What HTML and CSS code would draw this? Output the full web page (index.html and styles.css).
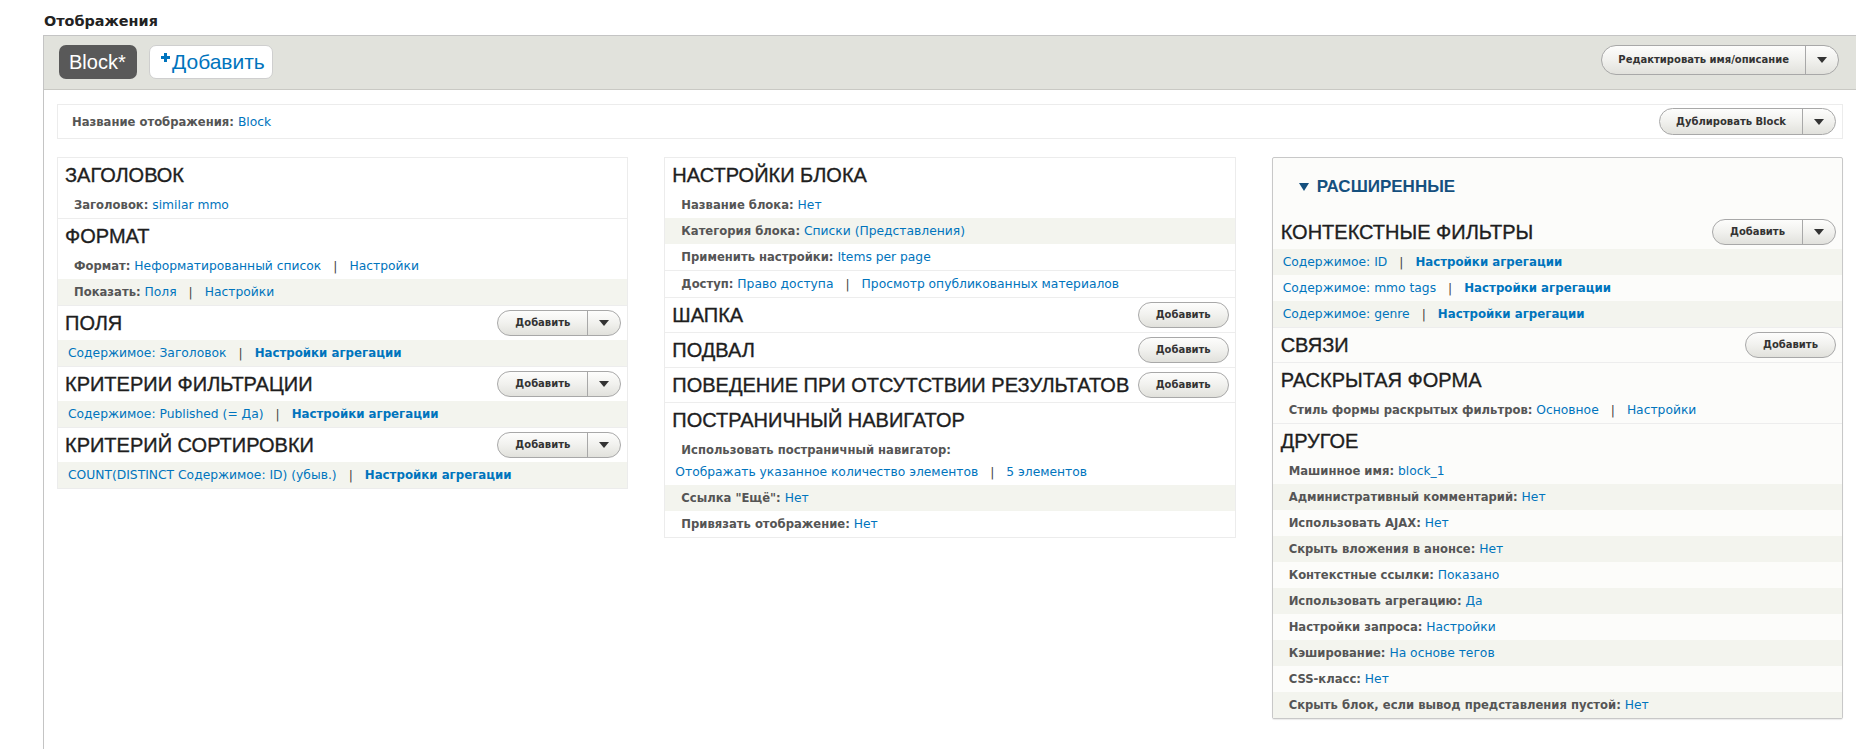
FILE: index.html
```html
<!DOCTYPE html>
<html lang="ru">
<head>
<meta charset="utf-8">
<title>Отображения</title>
<link rel="stylesheet" href="styles.css">
</head>
<body>
<div class="page">
  <h1 class="page-title">Отображения</h1>
  <div class="display">
    <div class="topbar">
      <div class="tabs">
        <span class="tab tab-active">Block*</span>
        <a class="tab tab-add"><svg class="plus" width="9" height="9" viewBox="0 0 9 9"><path d="M3 0h3v3h3v3H6v3H3V6H0V3h3z" fill="#0074bd"/></svg>Добавить</a>
      </div>
      <div class="dropbutton db-top">
        <span class="db-main">Редактировать имя/описание</span>
        <span class="db-arrow"><i class="tri"></i></span>
      </div>
    </div>
    <div class="display-body">
      <div class="namebar">
        <div class="namebar-text"><span class="lbl lbl-flush">Название отображения:</span> <a class="lnk">Block</a></div>
        <div class="dropbutton db-dup">
          <span class="db-main">Дублировать Block</span>
          <span class="db-arrow"><i class="tri"></i></span>
        </div>
      </div>

      <div class="columns">
        <!-- Left column -->
        <div class="col">
          <div class="bucket">
            <div class="bh"><h3>Заголовок</h3></div>
            <div class="row"><span class="lbl">Заголовок:</span> <a class="lnk">similar mmo</a></div>
          </div>
          <div class="bucket">
            <div class="bh"><h3>Формат</h3></div>
            <div class="row"><span class="lbl">Формат:</span> <a class="lnk">Неформатированный список</a><span class="sep">|</span><a class="lnk">Настройки</a></div>
            <div class="row odd"><span class="lbl">Показать:</span> <a class="lnk">Поля</a><span class="sep">|</span><a class="lnk">Настройки</a></div>
          </div>
          <div class="bucket">
            <div class="bh"><h3>Поля</h3>
              <div class="dropbutton"><span class="db-main">Добавить</span><span class="db-arrow"><i class="tri"></i></span></div>
            </div>
            <div class="row odd"><a class="lnk">Содержимое: Заголовок</a><span class="sep">|</span><a class="lnk strong">Настройки агрегации</a></div>
          </div>
          <div class="bucket">
            <div class="bh"><h3>Критерии фильтрации</h3>
              <div class="dropbutton"><span class="db-main">Добавить</span><span class="db-arrow"><i class="tri"></i></span></div>
            </div>
            <div class="row odd"><a class="lnk">Содержимое: Published (= Да)</a><span class="sep">|</span><a class="lnk strong">Настройки агрегации</a></div>
          </div>
          <div class="bucket">
            <div class="bh"><h3>Критерий сортировки</h3>
              <div class="dropbutton"><span class="db-main">Добавить</span><span class="db-arrow"><i class="tri"></i></span></div>
            </div>
            <div class="row odd"><a class="lnk">COUNT(DISTINCT Содержимое: ID) (убыв.)</a><span class="sep">|</span><a class="lnk strong">Настройки агрегации</a></div>
          </div>
        </div>

        <!-- Middle column -->
        <div class="col">
          <div class="bucket">
            <div class="bh"><h3>Настройки блока</h3></div>
            <div class="row"><span class="lbl">Название блока:</span> <a class="lnk">Нет</a></div>
            <div class="row odd"><span class="lbl">Категория блока:</span> <a class="lnk">Списки (Представления)</a></div>
            <div class="row line"><span class="lbl">Применить настройки:</span> <a class="lnk">Items per page</a></div>
            <div class="row"><span class="lbl">Доступ:</span> <a class="lnk">Право доступа</a><span class="sep">|</span><a class="lnk">Просмотр опубликованных материалов</a></div>
          </div>
          <div class="bucket">
            <div class="bh"><h3>Шапка</h3>
              <div class="button"><span class="db-main">Добавить</span></div>
            </div>
          </div>
          <div class="bucket">
            <div class="bh"><h3>Подвал</h3>
              <div class="button"><span class="db-main">Добавить</span></div>
            </div>
          </div>
          <div class="bucket">
            <div class="bh"><h3>Поведение при отсутствии результатов</h3>
              <div class="button"><span class="db-main">Добавить</span></div>
            </div>
          </div>
          <div class="bucket">
            <div class="bh"><h3>Постраничный навигатор</h3></div>
            <div class="row"><span class="lbl lbl-block">Использовать постраничный навигатор:</span><a class="lnk">Отображать указанное количество элементов</a><span class="sep">|</span><a class="lnk">5 элементов</a></div>
            <div class="row odd"><span class="lbl">Ссылка "Ещё":</span> <a class="lnk">Нет</a></div>
            <div class="row"><span class="lbl">Привязать отображение:</span> <a class="lnk">Нет</a></div>
          </div>
        </div>

        <!-- Right column -->
        <div class="col adv">
          <div class="adv-summary"><i class="tri tri-blue"></i><span>Расширенные</span></div>
          <div class="bucket">
            <div class="bh"><h3>Контекстные фильтры</h3>
              <div class="dropbutton"><span class="db-main">Добавить</span><span class="db-arrow"><i class="tri"></i></span></div>
            </div>
            <div class="row odd"><a class="lnk">Содержимое: ID</a><span class="sep">|</span><a class="lnk strong">Настройки агрегации</a></div>
            <div class="row"><a class="lnk">Содержимое: mmo tags</a><span class="sep">|</span><a class="lnk strong">Настройки агрегации</a></div>
            <div class="row odd"><a class="lnk">Содержимое: genre</a><span class="sep">|</span><a class="lnk strong">Настройки агрегации</a></div>
          </div>
          <div class="bucket">
            <div class="bh"><h3>Связи</h3>
              <div class="button"><span class="db-main">Добавить</span></div>
            </div>
          </div>
          <div class="bucket">
            <div class="bh"><h3>Раскрытая форма</h3></div>
            <div class="row"><span class="lbl">Стиль формы раскрытых фильтров:</span> <a class="lnk">Основное</a><span class="sep">|</span><a class="lnk">Настройки</a></div>
          </div>
          <div class="bucket">
            <div class="bh"><h3>Другое</h3></div>
            <div class="row"><span class="lbl">Машинное имя:</span> <a class="lnk">block_1</a></div>
            <div class="row odd"><span class="lbl">Административный комментарий:</span> <a class="lnk">Нет</a></div>
            <div class="row"><span class="lbl">Использовать AJAX:</span> <a class="lnk">Нет</a></div>
            <div class="row odd"><span class="lbl">Скрыть вложения в анонсе:</span> <a class="lnk">Нет</a></div>
            <div class="row"><span class="lbl">Контекстные ссылки:</span> <a class="lnk">Показано</a></div>
            <div class="row odd"><span class="lbl">Использовать агрегацию:</span> <a class="lnk">Да</a></div>
            <div class="row"><span class="lbl">Настройки запроса:</span> <a class="lnk">Настройки</a></div>
            <div class="row odd"><span class="lbl">Кэширование:</span> <a class="lnk">На основе тегов</a></div>
            <div class="row"><span class="lbl">CSS-класс:</span> <a class="lnk">Нет</a></div>
            <div class="row odd"><span class="lbl">Скрыть блок, если вывод представления пустой:</span> <a class="lnk">Нет</a></div>
          </div>
        </div>
      </div>
    </div>
  </div>
</div>
</body>
</html>
```

FILE: styles.css
```css
* { box-sizing: border-box; }
html, body { margin: 0; padding: 0; background: #fff; }
body {
  font-family: "DejaVu Sans", "Liberation Sans", sans-serif;
  font-size: 12.3px;
  color: #333;
  overflow: hidden;
}
.page {
  padding: 11px 0 0 43px;
}
.page-title {
  margin: 0 0 4px 1px;
  font-size: 14.4px;
  line-height: 20px;
  font-weight: bold;
  color: #222;
}
.display {
  border: 1px solid #c4c4c4;
  border-right: 0;
  border-bottom: 0;
  min-height: calc(100vh - 35px);
}
.topbar {
  background: #e1e2dc;
  border-bottom: 1px solid #c9c9c4;
  height: 54px;
  padding: 9px 17px 0 15px;
  display: flex;
  justify-content: space-between;
  align-items: flex-start;
}
.tabs { display: flex; gap: 12px; }
.tab {
  height: 34px;
  border-radius: 7px;
  font-family: "Liberation Sans", sans-serif;
  font-size: 20px;
  line-height: 34px;
  padding: 0 10px;
}
.tab-active {
  background: #595959;
  color: #fff;
  width: 78px;
}
.tab-add {
  background: #fff;
  border: 1px solid #cfcfcf;
  color: #0074bd;
  font-size: 21px;
  line-height: 32px;
  width: 124px;
  padding: 0 0 0 11px;
}
.plus { vertical-align: top; margin-top: 7px; margin-right: 2px; }

.dropbutton, .button {
  display: inline-flex;
  height: 26px;
  border: 1px solid #a8a8a8;
  border-radius: 14px;
  background: linear-gradient(to bottom, #fdfdfc 0%, #f1f1ee 50%, #e1e1dc 100%);
  overflow: hidden;
  flex: none;
}
.db-main {
  font-size: 10px;
  font-weight: bold;
  color: #333;
  line-height: 24px;
  padding: 0 17px;
  white-space: nowrap;
}
.button .db-main { padding: 0 17px; }
.db-arrow {
  width: 33px;
  border-left: 1px solid #a8a8a8;
  display: flex;
  align-items: center;
  justify-content: center;
}
.tri {
  display: inline-block;
  width: 0; height: 0;
  border-left: 5px solid transparent;
  border-right: 5px solid transparent;
  border-top: 6px solid #333;
}
.db-top { height: 30px; border-radius: 15px; }
.db-top .db-main { line-height: 28px; padding: 0 16px; }
.db-dup { height: 27px; }
.db-dup .db-main { line-height: 25px; padding: 0 16px; }

.display-body { padding: 14px 13px 0 13px; }
.namebar {
  height: 35px;
  border: 1px solid #ececec;
  display: flex;
  align-items: center;
  justify-content: space-between;
  padding: 0 6px 0 14px;
}
.lbl { font-weight: bold; font-size: 11.6px; color: #555; margin-left: 6px; }
.lbl-flush { margin-left: 0; }
.lbl-block { display: block; }
.lnk { color: #0074bd; text-decoration: none; }
.strong { font-weight: bold; font-size: 11.8px; }
.sep { color: #444; margin: 0 12px; }

.columns {
  display: grid;
  grid-template-columns: repeat(3, 1fr);
  column-gap: 36px;
  margin-top: 18px;
  align-items: start;
}
.col {
  border: 1px solid #ececec;
  background: #fff;
}
.bucket + .bucket { border-top: 1px solid #ededed; }
.bh {
  height: 34px;
  display: flex;
  align-items: center;
  justify-content: space-between;
  padding: 0 6px 0 7px;
}
.bh h3 {
  margin: 0;
  font-family: "Liberation Sans", sans-serif;
  font-weight: normal;
  font-size: 20px;
  text-transform: uppercase;
  color: #1e1e1e;
  -webkit-text-stroke: 0.35px #1e1e1e;
  white-space: nowrap;
}
.row {
  padding: 2px 10px;
  line-height: 22px;
  min-height: 26px;
}
.row.odd { background: #f3f4ee; }
.row.line { border-bottom: 1px solid #ededed; }

.adv {
  background: #fcfcfa;
  border: 1px solid #c8c8c8;
  border-radius: 2px;
  box-shadow: 0 1px 1px rgba(0,0,0,0.08);
}
.adv .bucket + .bucket { border-top: 1px solid #ededed; }
.adv-summary {
  height: 57px;
  padding: 0 0 0 26px;
  display: flex;
  align-items: center;
  gap: 8px;
  color: #15507e;
  font-family: "Liberation Sans", sans-serif;
  font-weight: bold;
  font-size: 17px;
  text-transform: uppercase;
}
.tri-blue { border-top-color: #15507e; border-left-width: 5px; border-right-width: 5px; border-top-width: 8px; }
.adv .bh { padding-left: 8px; }
```
